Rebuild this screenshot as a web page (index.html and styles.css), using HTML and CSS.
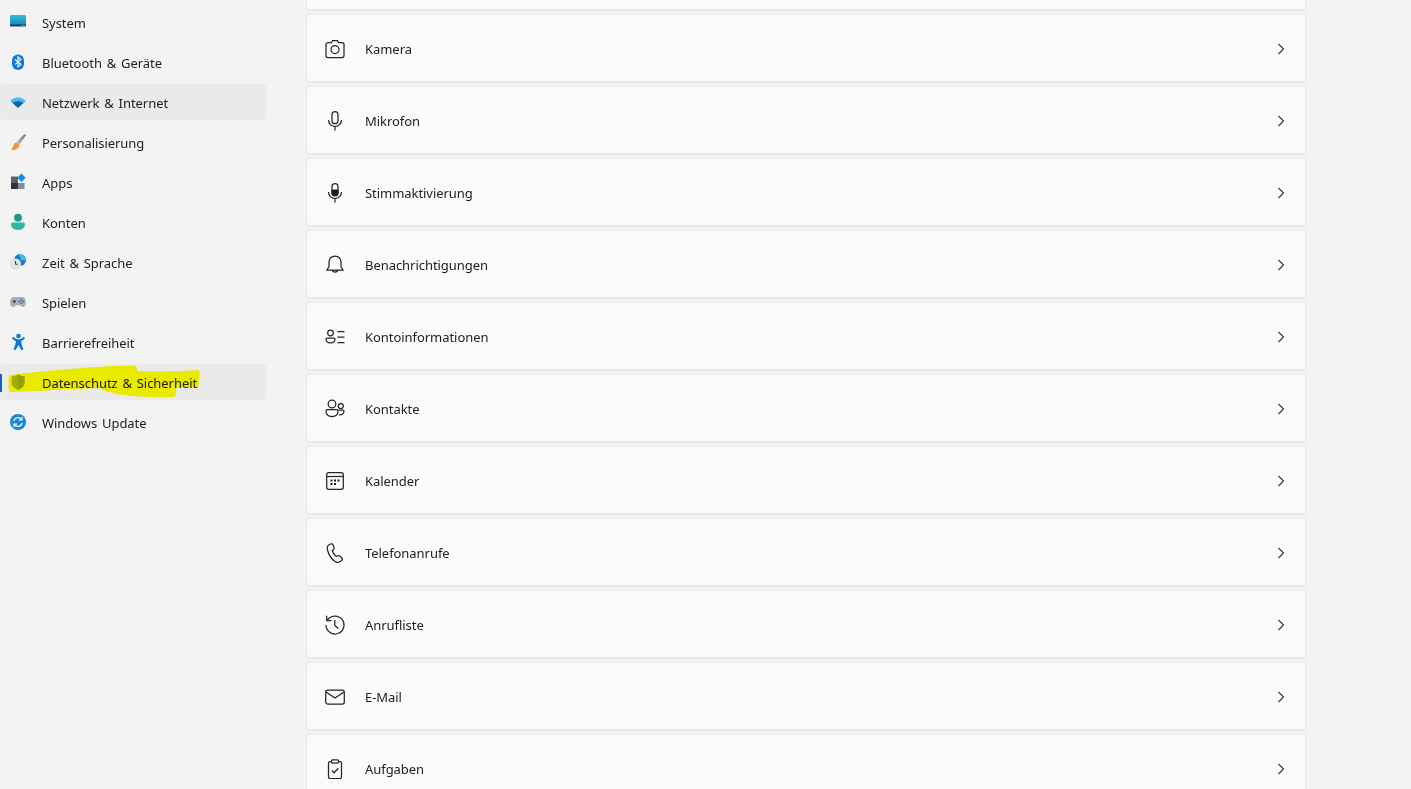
FILE: index.html
```html
<!DOCTYPE html>
<html lang="de">
  <head>
    <meta charset="UTF-8">
    <meta name="viewport" content="width=device-width, initial-scale=1.0">
    <title>Datenschutz &amp; Sicherheit</title>
    <link rel="stylesheet" href="styles.css">
  </head>
  <body>
    <div id="app">
      <nav class="sidebar">
        <a class="nav-item">
          <svg class="nav-icon" viewBox="0 0 18 18"><defs><linearGradient id="sys" x1="0" y1="0" x2="0" y2="1"><stop offset="0" stop-color="#35bcdc"/><stop offset="1" stop-color="#1b86b8"/></linearGradient></defs><path d="M1 3a1 1 0 0 1 1-1h14a1 1 0 0 1 1 1v9H1z" fill="url(#sys)"/><path d="M1 11.500h16v1a1 1 0 0 1-1 1H2a1 1 0 0 1-1-1z" fill="#163f63"/><path d="M12.500 12.500h1M14.500 12.500h1" stroke="#8fb4c4" stroke-width="1"/></svg>
          <span>System</span>
        </a>
        <a class="nav-item">
          <svg class="nav-icon" viewBox="0 0 18 18"><rect x="3" y="1.500" width="12" height="15.500" rx="6" fill="#0f78e0"/><path d="M6 6.500l6 4.700-3 2.600V4l3 2.600-6 4.800" fill="none" stroke="#fff" stroke-width="1.100"/></svg>
          <span>Bluetooth &amp; Geräte</span>
        </a>
        <a class="nav-item hovered">
          <svg class="nav-icon" viewBox="0 0 18 18"><path d="M1 7.800Q9 .6 17 7.800l-2.600 2.400H3.600z" fill="#4cbcf0"/><path d="M3.600 10Q9 6.200 14.400 10L9 15z" fill="#0d62ad"/></svg>
          <span>Netzwerk &amp; Internet</span>
        </a>
        <a class="nav-item">
          <svg class="nav-icon" viewBox="0 0 18 18"><defs><linearGradient id="brush" x1="1" y1="0" x2="0" y2="1"><stop offset="0" stop-color="#6f7276"/><stop offset="1" stop-color="#c2c4c6"/></linearGradient></defs><path d="M15.500 1 17 2.200 10.500 11.500 7.500 9z" fill="url(#brush)"/><path d="M7.300 9.200c-2.800.7-2.300 4-5.300 7.800 3.500.2 7.800-.5 8.300-5.300z" fill="#ef9430"/></svg>
          <span>Personalisierung</span>
        </a>
        <a class="nav-item">
          <svg class="nav-icon" viewBox="0 0 18 18"><rect x="2" y="3.500" width="7" height="6.500" fill="#5b626a"/><rect x="2" y="10" width="7" height="6" fill="#2d3640"/><rect x="9" y="10" width="6.500" height="6" fill="#858f97"/><path d="M12.500 0.500l4.200 4.200-4.200 4.200-4.200-4.200z" fill="#1291e0"/></svg>
          <span>Apps</span>
        </a>
        <a class="nav-item">
          <svg class="nav-icon" viewBox="0 0 18 18"><circle cx="9" cy="4.700" r="3.900" fill="#1a9d90"/><path d="M2 11.300a1.800 1.800 0 0 1 1.800-1.800h10.400a1.800 1.800 0 0 1 1.800 1.800c0 3.700-3.300 5.700-7 5.700s-7-2-7-5.700z" fill="#2fb7a4"/></svg>
          <span>Konten</span>
        </a>
        <a class="nav-item">
          <svg class="nav-icon" viewBox="0 0 18 18"><circle cx="11" cy="7" r="6" fill="#1681c8"/><path d="M10 1.100A6 6 0 0 1 17 7l-5 0z" fill="#4db8ea"/><circle cx="6.500" cy="11" r="5.500" fill="#dfe2e5"/><path d="M6.500 8v3.200h2.300" fill="none" stroke="#2f3a44" stroke-width="1"/></svg>
          <span>Zeit &amp; Sprache</span>
        </a>
        <a class="nav-item">
          <svg class="nav-icon" viewBox="0 0 18 18"><path d="M5 4h8c2.500 0 4 2 4 5.500 0 3-1.500 4.500-3 4.500-1.200 0-2-.8-2.800-1.800H6.800C6 13.200 5.200 14 4 14c-1.500 0-3-1.500-3-4.500C1 6 2.500 4 5 4z" fill="#aab1ba"/><path d="M3.600 8.500h3.400M5.300 6.800v3.400" stroke="#2f3944" stroke-width="1"/><circle cx="12.300" cy="6.800" r="1" fill="#2a74b8"/><circle cx="14.200" cy="8.500" r="1" fill="#2a74b8"/><circle cx="10.500" cy="8.500" r="1" fill="#2a74b8"/><circle cx="12.300" cy="10.200" r="1" fill="#2a74b8"/></svg>
          <span>Spielen</span>
        </a>
        <a class="nav-item">
          <svg class="nav-icon" viewBox="0 0 18 18"><circle cx="9.500" cy="3" r="2.300" fill="#0f78d4"/><path d="M4 3.700l3.800 2.500h3.400L15 3.700l1 1.800-4 3 .8 3.500 1.700 4.500-2.300.5-2.700-5-2.700 5-2.300-.5 1.700-4.500.8-3.500-4-3z" fill="#0f78d4"/></svg>
          <span>Barrierefreiheit</span>
        </a>
        <a class="nav-item hovered selected">
          <svg class="nav-icon" viewBox="0 0 18 18"><path d="M9 1.200c2 1.500 4 2 6.500 2.200v5.800c0 3.700-2.700 6.200-6.500 7.600-3.800-1.400-6.500-3.900-6.500-7.600V3.400C5 3.200 7 2.700 9 1.200z" fill="#a4aa2e"/><path d="M9 1.200c2 1.500 4 2 6.500 2.200v5.800c0 3.700-2.700 6.200-6.500 7.600z" fill="#979e28"/></svg>
          <span>Datenschutz &amp; Sicherheit</span>
        </a>
        <a class="nav-item">
          <svg class="nav-icon" viewBox="0 0 18 18"><circle cx="9" cy="9" r="8" fill="#1a86d4"/><path d="M4.800 8a4.300 4.300 0 0 1 7.500-1.800M13.200 10a4.300 4.300 0 0 1-7.500 1.800" fill="none" stroke="#fff" stroke-width="1.200"/><path d="M13 3.800v3h-3M5 14.200v-3h3" fill="none" stroke="#fff" stroke-width="1.200"/></svg>
          <span>Windows Update</span>
        </a>
        <svg class="marker" viewBox="0 0 210 40"><path d="M9 16C9 14 40 12 70 9 95 7 120 5 135 6c2 0 2 2 2 5 20 1 45 0 62-1 1 0 1 6-1 18-6 0-15 0-22 0 1 3 0 9-2 9-25 1-55-1-72-7-1-1-1-2-1-2C60 29 30 32 10 32 8 30 8 20 9 16z" fill="#ffff00"/></svg>
      </nav>

      <main class="content">
        <div class="card card-cut"></div>
        <a class="card">
          <svg class="card-icon" viewBox="0 0 20 20"><path d="M6.500 3.500 7.600 1.500h4.800l1.100 2h3.500a2 2 0 0 1 2 2v11a2 2 0 0 1-2 2H3a2 2 0 0 1-2-2v-11a2 2 0 0 1 2-2z"/><circle cx="10" cy="10.500" r="4"/></svg>
          <span>Kamera</span>
          <svg class="chevron" viewBox="0 0 12 12"><path d="M3.500 1 8.500 6l-5 5"/></svg>
        </a>
        <a class="card">
          <svg class="card-icon" viewBox="0 0 20 20"><rect x="7" y="0.700" width="6" height="12" rx="3"/><path d="M3.500 9a6.500 6.500 0 0 0 13 0M10 15.500v4"/></svg>
          <span>Mikrofon</span>
          <svg class="chevron" viewBox="0 0 12 12"><path d="M3.500 1 8.500 6l-5 5"/></svg>
        </a>
        <a class="card">
          <svg class="card-icon" viewBox="0 0 20 20"><rect x="7" y="0.700" width="6" height="12" rx="3"/><path d="M7 7h6v2.700a3 3 0 0 1-6 0z" fill="#1b1b1b"/><path d="M3.500 9a6.500 6.500 0 0 0 13 0M10 15.500v4"/></svg>
          <span>Stimmaktivierung</span>
          <svg class="chevron" viewBox="0 0 12 12"><path d="M3.500 1 8.500 6l-5 5"/></svg>
        </a>
        <a class="card">
          <svg class="card-icon" viewBox="0 0 20 20"><path d="M10 1a6 6 0 0 1 6 6v4.500l2 3.500H2l2-3.500V7a6 6 0 0 1 6-6zM7.200 15a2.900 2.900 0 0 0 5.600 0"/></svg>
          <span>Benachrichtigungen</span>
          <svg class="chevron" viewBox="0 0 12 12"><path d="M3.500 1 8.500 6l-5 5"/></svg>
        </a>
        <a class="card">
          <svg class="card-icon" viewBox="0 0 20 20"><circle cx="5.500" cy="6" r="2.800"/><path d="M1 12a1 1 0 0 1 1-1h7a1 1 0 0 1 1 1c0 2.500-2 3.800-4.500 3.800S1 14.500 1 12zM12.500 4.500h7M12.500 10h7M12.500 15.500h7"/></svg>
          <span>Kontoinformationen</span>
          <svg class="chevron" viewBox="0 0 12 12"><path d="M3.500 1 8.500 6l-5 5"/></svg>
        </a>
        <a class="card">
          <svg class="card-icon" viewBox="0 0 20 20"><circle cx="7" cy="5" r="3.800"/><circle cx="15.800" cy="7" r="2.500"/><path d="M1 12a1.500 1.500 0 0 1 1.500-1.500h9A1.500 1.500 0 0 1 13 12c0 3.500-2.500 5.500-6 5.500S1 15.500 1 12zM13.500 11h4.500a1 1 0 0 1 1 1c0 2.500-2 4-5 3.800"/></svg>
          <span>Kontakte</span>
          <svg class="chevron" viewBox="0 0 12 12"><path d="M3.500 1 8.500 6l-5 5"/></svg>
        </a>
        <a class="card">
          <svg class="card-icon" viewBox="0 0 20 20"><rect x="1.700" y="1.700" width="16.600" height="16.600" rx="2"/><path d="M1.700 5.500h16.600"/><path d="M5.500 8.500h2v2h-2zM9 8.500h2v2H9zM12.500 8.500h2v2h-2zM5.500 12h2v2h-2zM9 12h2v2H9z" fill="#1b1b1b" stroke="none"/></svg>
          <span>Kalender</span>
          <svg class="chevron" viewBox="0 0 12 12"><path d="M3.500 1 8.500 6l-5 5"/></svg>
        </a>
        <a class="card">
          <svg class="card-icon" viewBox="0 0 20 20"><path d="M5.500 1 3.700 2C2 3 2 5 2.500 7c1 4 4 9 7.500 11.500 2 1.300 4 1 5.500-.2l1.500-1.300c.6-.6.500-1.300 0-1.800l-2.400-2.200c-.6-.5-1.200-.5-1.800-.2l-1.600.8C9.500 12 7.800 9.500 7.300 7.500l1.400-1.200c.5-.5.600-1 .4-1.600L8 1.800C7.700 1 6.500.5 5.500 1z"/></svg>
          <span>Telefonanrufe</span>
          <svg class="chevron" viewBox="0 0 12 12"><path d="M3.500 1 8.500 6l-5 5"/></svg>
        </a>
        <a class="card">
          <svg class="card-icon" viewBox="0 0 20 20"><path d="M2.400 5.200A9 9 0 1 1 1 10M1.700 .8v4.700h4.700M9.800 5v5.500l3.500 3"/></svg>
          <span>Anrufliste</span>
          <svg class="chevron" viewBox="0 0 12 12"><path d="M3.500 1 8.500 6l-5 5"/></svg>
        </a>
        <a class="card">
          <svg class="card-icon" viewBox="0 0 20 20"><rect x="0.700" y="3" width="18.600" height="14" rx="2"/><path d="M1 5l9 6 9-6"/></svg>
          <span>E-Mail</span>
          <svg class="chevron" viewBox="0 0 12 12"><path d="M3.500 1 8.500 6l-5 5"/></svg>
        </a>
        <a class="card">
          <svg class="card-icon" viewBox="0 0 20 20"><path d="M6.500 2.500H5A1.500 1.500 0 0 0 3.500 4v14A1.500 1.500 0 0 0 5 19.500h10a1.500 1.500 0 0 0 1.500-1.500V4A1.500 1.500 0 0 0 15 2.500h-1.500"/><rect x="6.500" y="0.800" width="7" height="3.200" rx="1"/><path d="M6.800 11.500l2.300 2.300 4.200-4.500"/></svg>
          <span>Aufgaben</span>
          <svg class="chevron" viewBox="0 0 12 12"><path d="M3.500 1 8.500 6l-5 5"/></svg>
        </a>
      </main>
    </div>
  </body>
</html>
```

FILE: styles.css
```css
html, body {
    margin: 0;
    height: 100%;
}
body {
    font-family: "Noto Sans", "Open Sans", sans-serif;
    font-size: 13px;
    letter-spacing: -0.05px;
    word-spacing: 1.5px;
    color: #222;
    background-color: #f3f3f3;
    overflow: hidden;
}
#app {
    display: flex;
    height: 789px;
    overflow: hidden;
}

/* sidebar */
.sidebar {
    position: relative;
    width: 266px;
    flex-shrink: 0;
    padding-top: 4px;
    display: flex;
    flex-direction: column;
    gap: 4px;
}
.nav-item {
    position: relative;
    display: flex;
    align-items: center;
    gap: 15px;
    height: 36px;
    padding-left: 9px;
    border-radius: 4px;
}
.nav-item span {
    position: relative;
    top: 1px;
}
.nav-icon {
    width: 18px;
    height: 18px;
    flex-shrink: 0;
}
.hovered {
    background-color: #eaeaea;
}
.selected::before {
    content: "";
    position: absolute;
    left: 0;
    top: 10px;
    width: 2px;
    height: 18px;
    background-color: #0f6cbd;
}
.marker {
    position: absolute;
    left: 0;
    top: 360px;
    width: 210px;
    height: 40px;
    mix-blend-mode: multiply;
}

/* cards */
.content {
    width: 1000px;
    margin-left: 40px;
    display: flex;
    flex-direction: column;
    gap: 4px;
}
.card {
    display: flex;
    align-items: center;
    flex-shrink: 0;
    box-sizing: border-box;
    height: 68px;
    padding-top: 2px;
    padding-left: 18px;
    background-color: #fbfbfb;
    border: 1px solid #e9e9e9;
    border-radius: 4px;
    box-shadow: 0 1px 0 #e9e9e9;
}
.card-cut {
    height: 10px;
    padding-top: 0;
    border-top: none;
    border-top-left-radius: 0;
    border-top-right-radius: 0;
}
.card span {
    margin-left: 20px;
}
.card-icon {
    width: 20px;
    height: 20px;
    flex-shrink: 0;
    fill: none;
    stroke: #262626;
    stroke-width: 1.25;
}
.chevron {
    width: 12px;
    height: 12px;
    margin-left: auto;
    margin-right: 18px;
    fill: none;
    stroke: #404040;
    stroke-width: 1.25;
}
```
